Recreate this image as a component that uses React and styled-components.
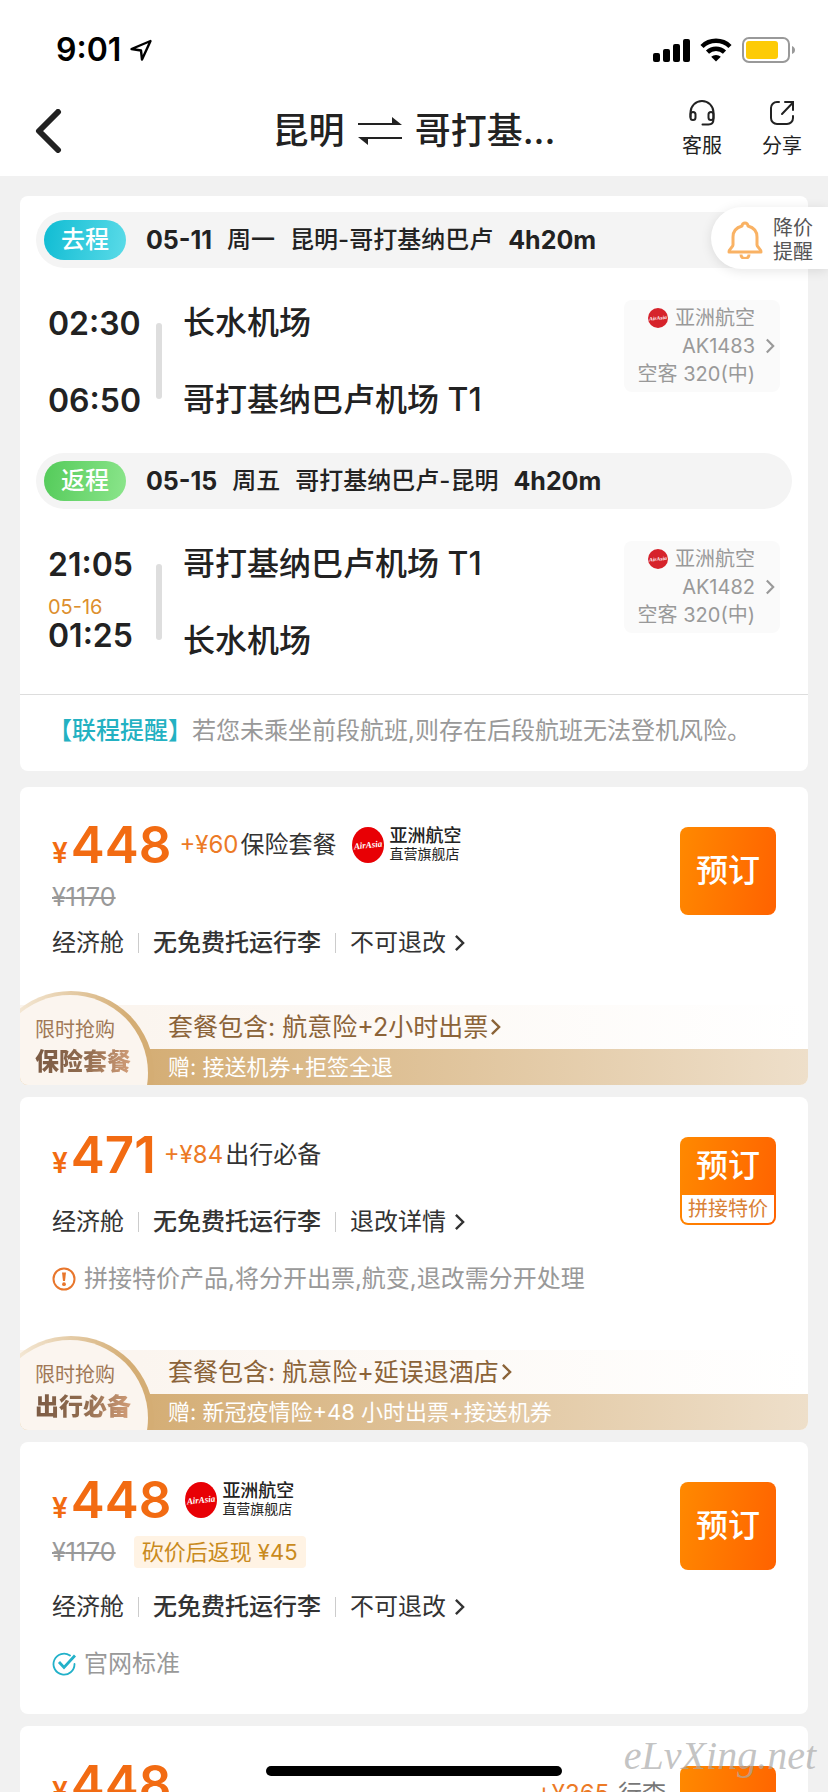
import React from 'react'
import styled, { createGlobalStyle } from 'styled-components'

const GlobalStyle = createGlobalStyle`
  * {
    box-sizing: border-box;
  }
  body {
    margin: 0;
    background: #f1f1f1;
    color: #222;
    font-family: Inter, "Noto Sans CJK SC", sans-serif;
    font-size: 24px;
    line-height: 32px;
  }
  button {
    margin: 0;
    padding: 0;
    border: 0;
    background: none;
    color: inherit;
    font: inherit;
    cursor: pointer;
  }
  h1, h2, p {
    margin: 0;
    font: inherit;
  }
  svg {
    flex: none;
  }
`

const Screen = styled.div`
  position: relative;
  display: flex;
  flex-direction: column;
  height: 100vh;
  overflow: hidden;
`

const StatusBar = styled.div`
  display: flex;
  align-items: center;
  justify-content: space-between;
  height: 86px;
  padding: 14px 32px 0 56px;
  background: #fff;
  color: #000;
`

const Clock = styled.div`
  display: flex;
  align-items: center;
  gap: 8px;
  font-size: 32px;
  font-weight: 600;
`

const StatusIcons = styled.div`
  display: flex;
  align-items: center;
  gap: 10px;
`

const NavBar = styled.header`
  display: grid;
  grid-template-columns: 1fr auto 1fr;
  align-items: center;
  height: 90px;
  padding: 0 26px;
  background: #fff;
`

const BackButton = styled.button`
  display: flex;
  justify-self: start;
  padding-left: 8px;
`

const Title = styled.h1`
  display: flex;
  align-items: center;
  gap: 12px;
  font-size: 36px;
  line-height: 48px;
  font-weight: 500;
`

const NavActions = styled.div`
  display: flex;
  justify-content: flex-end;
  gap: 40px;
`

const NavAction = styled.button`
  display: flex;
  flex-direction: column;
  align-items: center;
  gap: 8px;
  padding-bottom: 4px;
  font-size: 20px;
  line-height: 24px;
`

const Content = styled.main`
  position: relative;
  flex: 1;
  min-height: 0;
  overflow-y: auto;
  scrollbar-width: none;
  padding: 20px;
`

const Card = styled.section`
  overflow: hidden;
  border-radius: 8px;
  background: #fff;
`

const TripCard = styled(Card)`
  margin-bottom: 16px;
  padding-top: 16px;
`

const OfferCard = styled(Card)`
  margin-bottom: 12px;
`

const LegHeader = styled.div`
  display: flex;
  align-items: center;
  gap: 20px;
  height: 56px;
  margin: 0 16px;
  padding: 0 8px;
  border-radius: 28px;
  background: #f4f4f4;
`

const LegTag = styled.span`
  width: 82px;
  border-radius: 20px;
  background: ${props => props.$back
    ? 'linear-gradient(100deg, #54cb5a, #8be58b)'
    : 'linear-gradient(100deg, #10bcd3, #5bdbe8)'};
  color: #fff;
  line-height: 40px;
  font-weight: 500;
  text-align: center;
`

const LegInfo = styled.h2`
  display: flex;
  gap: 15px;
  font-weight: 500;
  b {
    font-size: 25px;
    font-weight: 700;
  }
`

const LegBody = styled.div`
  display: flex;
  align-items: flex-start;
  padding: 32px 28px 33px;
`

const Times = styled.div`
  display: flex;
  flex-direction: column;
  gap: ${props => (props.$nextDay ? 13 : 43)}px;
  width: 108px;
  padding-top: 7px;
  font-size: 32px;
  line-height: 34px;
  font-weight: 600;
`

const NextDay = styled.div`
  color: #dd8f2e;
  font-size: 20px;
  line-height: 24px;
  font-weight: 400;
`

const LegLine = styled.div`
  width: 6px;
  height: 76px;
  margin: 23px 21px 0 0;
  border-radius: 3px;
  background: #dedede;
`

const Airports = styled.div`
  display: flex;
  flex: 1;
  flex-direction: column;
  gap: 37px;
  padding-top: 3px;
  font-size: 32px;
  line-height: 40px;
  font-weight: 500;
`

const FlightBox = styled.button`
  display: flex;
  align-items: center;
  justify-content: flex-end;
  gap: 10px;
  width: 156px;
  padding: 4px 5px;
  border-radius: 8px;
  background: #fafafa;
  color: #999;
  font-size: 20px;
  line-height: 28px;
  text-align: right;
`

const FlightAirline = styled.div`
  display: flex;
  align-items: center;
  justify-content: flex-end;
  gap: 7px;
`

const TransferNotice = styled.p`
  padding: 20px 28px 24px;
  border-top: 1px solid #ddd;
  color: #999;
  white-space: nowrap;
  b {
    color: #23b1c2;
    font-weight: 500;
  }
`

const PriceAlert = styled.button`
  position: absolute;
  top: 31px;
  right: 0;
  display: flex;
  align-items: center;
  gap: 10px;
  height: 62px;
  padding: 4px 15px 0 16px;
  border-radius: 31px 0 0 31px;
  background: #fff;
  box-shadow: 0 2px 12px rgba(0, 0, 0, 0.1);
  color: #555;
  font-size: 20px;
  line-height: 24px;
`

const OfferBody = styled.div`
  display: flex;
  align-items: flex-start;
  justify-content: space-between;
  padding: 40px 32px ${props => props.$bottom}px;
`

const PriceRow = styled.div`
  display: flex;
  align-items: center;
  height: 36px;
`

const Price = styled.strong`
  margin-right: 8px;
  color: #f26b12;
  font-size: 51px;
  line-height: 36px;
  font-weight: 600;
  small {
    margin-right: 3px;
    font-size: 28px;
    line-height: 0;
  }
`

const AddOn = styled.span`
  color: #333;
  i {
    margin-right: 2px;
    color: #ec7a26;
    font-style: normal;
  }
`

const Store = styled.div`
  display: flex;
  align-items: center;
  gap: 5px;
  margin-left: ${props => (props.$wide ? 16 : 6)}px;
  font-size: 14px;
  line-height: 18px;
  b {
    display: block;
    font-size: 18px;
    font-weight: 500;
  }
`

const OldPriceRow = styled.div`
  display: flex;
  align-items: center;
  gap: 18px;
  margin-top: 18px;
  color: #999;
  font-size: 25px;
`

const CashBack = styled.span`
  padding: 0 8px;
  border-radius: 4px;
  background: #fff3e4;
  color: #c98a1c;
  font-size: 22px;
`

const CabinRow = styled.button`
  display: flex;
  align-items: center;
  gap: 14px;
  margin-top: ${props => props.$top}px;
  color: #333;
  b {
    font-weight: 500;
  }
`

const Rule = styled.span`
  width: 1px;
  height: 20px;
  background: #ccc;
`

const RefundLink = styled.span`
  display: flex;
  align-items: center;
  gap: 8px;
`

const OfferNote = styled.p`
  display: flex;
  align-items: center;
  gap: 8px;
  margin-top: 25px;
  color: #999;
  white-space: nowrap;
`

const BookArea = styled.div`
  display: flex;
  gap: 14px;
  margin-left: -40px;
`

const BookNote = styled(AddOn)`
  margin-top: 12px;
  color: #777;
`

const BookButton = styled.button`
  display: flex;
  flex-direction: column;
  width: 96px;
  height: 88px;
  padding: ${props => (props.$split ? '0 2px 2px' : 0)};
  border-radius: 8px;
  background: linear-gradient(100deg, #ff8900, #ff6200);
  color: #fff;
  font-size: 32px;
  font-weight: 500;
  span {
    display: flex;
    flex: 1;
    align-items: center;
    justify-content: center;
    width: 100%;
  }
  small {
    width: 100%;
    border-radius: 0 0 6px 6px;
    background: #fff;
    color: #d98136;
    font-size: 20px;
    line-height: 28px;
    font-weight: 400;
  }
`

const Promo = styled.div`
  position: relative;
`

const PromoTop = styled.button`
  display: flex;
  align-items: center;
  gap: 2px;
  width: 100%;
  height: 44px;
  padding-left: 148px;
  background: linear-gradient(90deg, #fbf5ef 15%, #fff);
  color: #8b6338;
  font-size: 25px;
`

const PromoGift = styled.div`
  padding-left: 148px;
  background: linear-gradient(90deg, #d4ad74 15%, #eedfca);
  color: #fff;
  font-size: 22px;
  line-height: 36px;
`

const PromoBadge = styled.div`
  position: absolute;
  bottom: 0;
  left: 0;
  width: 136px;
  height: 94px;
  padding: 24px 0 0 15px;
  color: #a07856;
  font-size: 20px;
  line-height: 30px;
  svg {
    position: absolute;
    inset: 0;
  }
  span {
    position: relative;
  }
`

const PromoName = styled.span`
  display: block;
  width: 98px;
  background: linear-gradient(100deg, #7b5a43, #8f6b4f 50%, #d8a27c);
  background-clip: text;
  -webkit-background-clip: text;
  color: transparent;
  font-size: 24px;
  line-height: 34px;
  font-weight: 900;
`

const HomeBar = styled.div`
  position: absolute;
  bottom: 16px;
  left: 50%;
  width: 296px;
  height: 10px;
  margin-left: -148px;
  border-radius: 5px;
  background: #000;
`

const Watermark = styled.div`
  position: absolute;
  right: 12px;
  bottom: 16px;
  color: rgba(170, 170, 170, 0.7);
  font-family: "Liberation Serif", serif;
  font-size: 40px;
  line-height: 40px;
  font-style: italic;
`

function Chevron({ size = 16, stroke = 2 }) {
  return (
    <svg width={Math.round(size * 0.6)} height={size} viewBox="0 0 9 15" fill="none">
      <path d="M1.5 1.5l6 6-6 6" stroke="currentColor" strokeWidth={stroke} />
    </svg>
  )
}

function AirAsiaLogo({ small }) {
  return (
    <svg width={small ? 20 : 32} height={small ? 20 : 36} viewBox="0 0 32 36" preserveAspectRatio="none">
      <ellipse cx="16" cy="18" rx="16" ry="18" fill={small ? '#d6232b' : '#e80005'} />
      <text
        x="16"
        y="21"
        textAnchor="middle"
        fill="#fff"
        fontFamily="Liberation Serif, serif"
        fontStyle="italic"
        fontWeight="700"
        fontSize="9"
        transform="rotate(-6 16 18)"
      >
        AirAsia
      </text>
    </svg>
  )
}

function Leg({ back, tag, date, day, route, times, airports, nextDay, flight }) {
  return (
    <>
      <LegHeader>
        <LegTag $back={back}>{tag}</LegTag>
        <LegInfo>
          <b>{date}</b>
          <span>{day}</span>
          <span>{route}</span>
          <b>4h20m</b>
        </LegInfo>
      </LegHeader>
      <LegBody>
        <Times $nextDay={nextDay}>
          <div>{times[0]}</div>
          <div>
            {nextDay && <NextDay>{nextDay}</NextDay>}
            {times[1]}
          </div>
        </Times>
        <LegLine />
        <Airports>
          <div>{airports[0]}</div>
          <div>{airports[1]}</div>
        </Airports>
        <FlightBox>
          <div>
            <FlightAirline>
              <AirAsiaLogo small />
              亚洲航空
            </FlightAirline>
            <div>{flight}</div>
            <div>空客 320(中)</div>
          </div>
          <Chevron />
        </FlightBox>
      </LegBody>
    </>
  )
}

function PromoBanner({ name, includes, gift, id }) {
  return (
    <Promo>
      <PromoTop>
        {includes}
        <Chevron size={18} />
      </PromoTop>
      <PromoGift>{gift}</PromoGift>
      <PromoBadge>
        <svg width="136" height="94" viewBox="0 0 136 94">
          <defs>
            <linearGradient id={id} x1="0" y1="0" x2="1" y2="0">
              <stop offset="0.2" stopColor="#f3e6d2" />
              <stop offset="0.85" stopColor="#d4ad74" />
            </linearGradient>
          </defs>
          <circle cx="51" cy="83" r="83" fill={`url(#${id})`} />
          <circle cx="50" cy="82" r="78" fill="#fbf5ef" />
        </svg>
        <span>限时抢购</span>
        <PromoName>{name}</PromoName>
      </PromoBadge>
    </Promo>
  )
}

function Offer({ price, addPrice, addName, store, oldPrice, cashBack, refund, cabinTop, note, bottom, tag, bookNote, promo }) {
  return (
    <OfferCard>
      <OfferBody $bottom={bottom}>
        <div>
          <PriceRow>
            <Price>
              <small>¥</small>
              {price}
            </Price>
            {addPrice && (
              <AddOn>
                <i>+¥{addPrice}</i>
                {addName}
              </AddOn>
            )}
            {store && (
              <Store $wide={addPrice}>
                <AirAsiaLogo />
                <div>
                  <b>亚洲航空</b>
                  直营旗舰店
                </div>
              </Store>
            )}
          </PriceRow>
          {oldPrice && (
            <OldPriceRow>
              <s>¥{oldPrice}</s>
              {cashBack && <CashBack>砍价后返现 ¥{cashBack}</CashBack>}
            </OldPriceRow>
          )}
          <CabinRow $top={cabinTop}>
            经济舱
            <Rule />
            <b>无免费托运行李</b>
            <Rule />
            <RefundLink>
              {refund}
              <Chevron size={18} />
            </RefundLink>
          </CabinRow>
          {note}
        </div>
        <BookArea>
          {bookNote}
          <BookButton $split={tag}>
            <span>预订</span>
            {tag && <small>{tag}</small>}
          </BookButton>
        </BookArea>
      </OfferBody>
      {promo}
    </OfferCard>
  )
}

function App() {
  return (
    <Screen>
      <GlobalStyle />
      <StatusBar>
        <Clock>
          9:01
          <svg width="24" height="24" viewBox="0 0 24 24" fill="none">
            <path d="M21.5 3L2.5 11l9.5 1.500L13 21.500z" stroke="#000" strokeWidth="2.400" strokeLinejoin="round" />
          </svg>
        </Clock>
        <StatusIcons>
          <svg width="37" height="24" viewBox="0 0 37 24">
            <rect x="0" y="15" width="7" height="9" rx="2" />
            <rect x="10" y="11" width="7" height="13" rx="2" />
            <rect x="20" y="6" width="7" height="18" rx="2" />
            <rect x="30" y="1" width="7" height="23" rx="2" />
          </svg>
          <svg width="32" height="24" viewBox="0 0 32 24" fill="none" stroke="#000" strokeWidth="4.500">
            <path d="M2 8.500a20 20 0 0 1 28 0" />
            <path d="M7.500 14.200a12.300 12.300 0 0 1 17 0" />
            <path d="M16 23.500l-4.800-4.700a7 7 0 0 1 9.600 0z" fill="#000" stroke="none" />
          </svg>
          <svg width="54" height="26" viewBox="0 0 54 26">
            <rect x="1" y="1" width="46" height="24" rx="6" fill="none" stroke="#999" strokeWidth="2" />
            <rect x="4" y="4" width="32" height="18" rx="3" fill="#fdcb05" />
            <path d="M50 9v8c2-1 3-2 3-4s-1-3-3-4z" fill="#999" />
          </svg>
        </StatusIcons>
      </StatusBar>

      <NavBar>
        <BackButton aria-label="返回">
          <svg width="28" height="44" viewBox="0 0 28 44" fill="none">
            <path d="M24 3L5 22l19 19" stroke="#222" strokeWidth="6" strokeLinecap="round" strokeLinejoin="round" />
          </svg>
        </BackButton>
        <Title>
          昆明
          <svg width="46" height="28" viewBox="0 0 46 28" fill="#222">
            <path d="M1 6h34V0l10 8H1z" />
            <path d="M45 22H11v6L1 20h44z" />
          </svg>
          哥打基...
        </Title>
        <NavActions>
          <NavAction>
            <svg width="26" height="26" viewBox="0 0 26 26" fill="none" stroke="#222" strokeWidth="2" strokeLinecap="round">
              <path d="M1.500 17v-4.500a11.500 11.500 0 0 1 23 0V19c0 3.500-2 5.500-5 5.500h-6" />
              <rect x="1.500" y="12" width="5" height="8" rx="2.500" />
              <rect x="19.500" y="12" width="5" height="8" rx="2.500" />
            </svg>
            客服
          </NavAction>
          <NavAction>
            <svg width="26" height="26" viewBox="0 0 26 26" fill="none" stroke="#222" strokeWidth="2" strokeLinecap="round">
              <path d="M10 2H8a6 6 0 0 0-6 6v10a6 6 0 0 0 6 6h10a6 6 0 0 0 6-6v-2" />
              <path d="M13 14L24 2.500M16 2h8v8" />
            </svg>
            分享
          </NavAction>
        </NavActions>
      </NavBar>

      <Content>
        <TripCard>
          <Leg
            tag="去程"
            date="05-11"
            day="周一"
            route="昆明-哥打基纳巴卢"
            times={['02:30', '06:50']}
            airports={['长水机场', '哥打基纳巴卢机场 T1']}
            flight="AK1483"
          />
          <Leg
            back
            tag="返程"
            date="05-15"
            day="周五"
            route="哥打基纳巴卢-昆明"
            times={['21:05', '01:25']}
            nextDay="05-16"
            airports={['哥打基纳巴卢机场 T1', '长水机场']}
            flight="AK1482"
          />
          <TransferNotice>
            <b>【联程提醒】</b>
            若您未乘坐前段航班,则存在后段航班无法登机风险。
          </TransferNotice>
        </TripCard>

        <Offer
          price="448"
          addPrice="60"
          addName="保险套餐"
          store
          oldPrice="1170"
          refund="不可退改"
          cabinTop={14}
          bottom={46}
          promo={
            <PromoBanner
              id="arc-insurance"
              name="保险套餐"
              includes="套餐包含: 航意险+2小时出票"
              gift="赠: 接送机券+拒签全退"
            />
          }
        />
        <Offer
          price="471"
          addPrice="84"
          addName="出行必备"
          refund="退改详情"
          cabinTop={33}
          bottom={55}
          tag="拼接特价"
          note={
            <OfferNote>
              <svg width="24" height="24" viewBox="0 0 24 24" fill="none">
                <circle cx="12" cy="12" r="10.500" stroke="#e8762c" strokeWidth="2" />
                <path d="M10 5.500h4l-1 8.500h-2z" fill="#e8762c" />
                <circle cx="12" cy="17.200" r="1.900" fill="#e8762c" />
              </svg>
              拼接特价产品,将分开出票,航变,退改需分开处理
            </OfferNote>
          }
          promo={
            <PromoBanner
              id="arc-travel"
              name="出行必备"
              includes="套餐包含: 航意险+延误退酒店"
              gift="赠: 新冠疫情险+48 小时出票+接送机券"
            />
          }
        />
        <Offer
          price="448"
          store
          oldPrice="1170"
          cashBack="45"
          refund="不可退改"
          cabinTop={23}
          bottom={34}
          note={
            <OfferNote>
              <svg width="24" height="24" viewBox="0 0 24 24" fill="none" stroke="#22b1c9">
                <path d="M18 3.500A10.500 10.500 0 1 0 22.500 12" strokeWidth="1.800" strokeLinecap="round" />
                <path d="M7 10l5 5.500L23 3.500" strokeWidth="2.800" />
              </svg>
              官网标准
            </OfferNote>
          }
        />
        <Offer
          price="448"
          refund="不可退改"
          cabinTop={33}
          bottom={40}
          bookNote={
            <BookNote>
              <i>+¥365</i> 行李
            </BookNote>
          }
        />

        <PriceAlert>
          <svg width="36" height="38" viewBox="0 0 36 38" fill="none" stroke="#f9b264" strokeWidth="3" strokeLinejoin="round">
            <path d="M15 5a3 3 0 0 1 6 0c5.500 1.500 9 5.500 9 11v8c0 2 4 4 4 7H2c0-3 4-5 4-7v-8c0-5.500 3.500-9.500 9-11z" />
            <path d="M14 33.500a4 4 0 0 0 8 0" />
          </svg>
          <span>
            降价
            <br />
            提醒
          </span>
        </PriceAlert>
      </Content>

      <HomeBar />
      <Watermark>eLvXing.net</Watermark>
    </Screen>
  )
}

export default App
